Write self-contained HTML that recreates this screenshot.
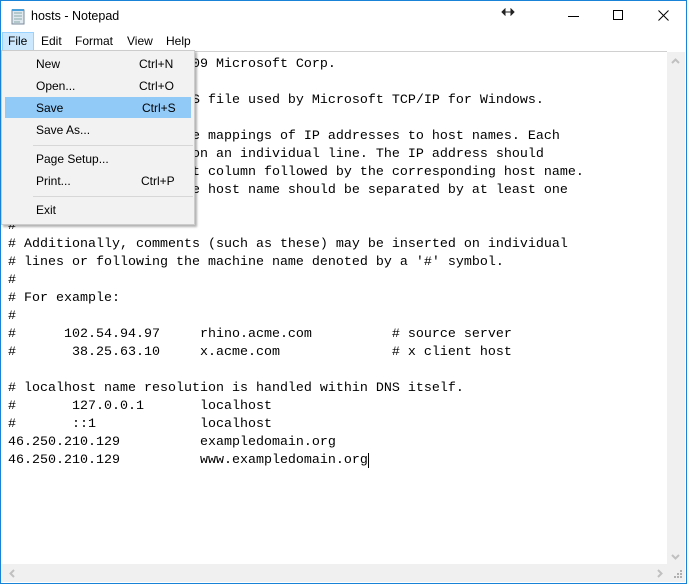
<!DOCTYPE html>
<html><head><style>
*{margin:0;padding:0;box-sizing:border-box}
body{width:687px;height:584px;overflow:hidden;background:#fff;font-family:"Liberation Sans",sans-serif;position:relative}
.win{position:absolute;left:0;top:0;width:687px;height:584px;border:1px solid #1883d7;background:#fff}
.title{position:absolute;left:30px;top:8px;font-size:12.5px;color:#000}
.menubar{position:absolute;top:31px;left:0;width:685px;height:19px;font-size:12px}
.menubar span{position:absolute;top:2px}
.file{position:absolute;left:1px;top:0;width:32px;height:19px;background:#cce8ff;border:1px solid #99d1ff}
.edit{position:absolute;left:1px;top:51px;width:666px;height:513px;border-top:1px solid #d0d0d0;background:#fff}
pre{position:absolute;left:7px;top:4px;font-family:"Liberation Mono",monospace;font-size:13.33px;line-height:18px;color:#000}
.vs{position:absolute;left:667px;top:52px;width:18px;height:513px;background:#f0f0f0}
.hs{position:absolute;left:1px;top:564px;width:684px;height:18px;background:#f0f0f0}
.menu{position:absolute;left:1px;top:50px;width:194px;height:175px;background:#f2f2f2;border:1px solid #ccc;box-shadow:2px 2px 2px rgba(0,0,0,.3);font-size:12px}
.it{position:absolute;left:0;width:192px;height:21px}
.it .l{position:absolute;left:34px;top:4px}
.it .r{position:absolute;left:137px;top:4px}
.sel{background:#91c9f7;left:3px;width:186px}
.sel .l{left:31px}.sel .r{left:134px}
.sep{position:absolute;left:31px;width:160px;height:1px;background:#d7d7d7}
</style></head><body>
<div class="win">
<svg style="position:absolute;left:9px;top:7px" width="16" height="17" viewBox="0 0 16 17"><rect x="2" y="2" width="12" height="14" fill="#dfe8ee" stroke="#7a8a99"/><path d="M4 5h8M4 8h8M4 11h8M4 14h6" stroke="#8aa" /><rect x="2" y="1" width="12" height="2" fill="#4aa0d8"/></svg>
<div class="title">hosts - Notepad</div>
<svg style="position:absolute;left:500px;top:7px" width="14" height="8"><path d="M1 4h12M1 4l3-3v6zM13 4l-3-3v6z" stroke="#222" fill="#222"/></svg>
<div style="position:absolute;left:567px;top:15px;width:11px;height:1px;background:#000"></div>
<div style="position:absolute;left:612px;top:9px;width:10px;height:10px;border:1px solid #000"></div>
<svg style="position:absolute;left:657px;top:9px" width="11" height="11"><path d="M0.5 0.5l10 10M10.5 0.5l-10 10" stroke="#000"/></svg>
<div class="menubar"><div class="file"></div><span style="left:7px">File</span><span style="left:40px">Edit</span><span style="left:74px">Format</span><span style="left:126px">View</span><span style="left:165px">Help</span></div>
</div>
<div class="edit"><pre># Copyright (c) 1993-2009 Microsoft Corp.
#
# This is a sample HOSTS file used by Microsoft TCP/IP for Windows.
#
# This file contains the mappings of IP addresses to host names. Each
# entry should be kept on an individual line. The IP address should
# be placed in the first column followed by the corresponding host name.
# The IP address and the host name should be separated by at least one
# space.
#
# Additionally, comments (such as these) may be inserted on individual
# lines or following the machine name denoted by a '#' symbol.
#
# For example:
#
#      102.54.94.97     rhino.acme.com          # source server
#       38.25.63.10     x.acme.com              # x client host

# localhost name resolution is handled within DNS itself.
#       127.0.0.1       localhost
#       ::1             localhost
46.250.210.129          exampledomain.org
46.250.210.129          www.exampledomain.org<span style="border-left:1px solid #000;margin-left:0"></span></pre></div>
<div class="vs"><svg style="position:absolute;left:4px;top:6px" width="9" height="6"><path d="M1 5l3.5-3.5L8 5" stroke="#c0c0c0" stroke-width="2" fill="none"/></svg><svg style="position:absolute;left:4px;top:502px" width="9" height="6"><path d="M1 1l3.5 3.5L8 1" stroke="#c0c0c0" stroke-width="2" fill="none"/></svg></div>
<div class="hs"><svg style="position:absolute;left:8px;top:5px" width="6" height="9"><path d="M5 1L1.5 4.5 5 8" stroke="#c0c0c0" stroke-width="2" fill="none"/></svg><svg style="position:absolute;left:656px;top:5px" width="6" height="9"><path d="M1 1l3.5 3.5L1 8" stroke="#c0c0c0" stroke-width="2" fill="none"/></svg>
<svg style="position:absolute;left:672px;top:6px" width="10" height="10" fill="#b0b0b0"><rect x="7" y="0" width="2" height="2"/><rect x="4" y="3" width="2" height="2"/><rect x="7" y="3" width="2" height="2"/><rect x="1" y="6" width="2" height="2"/><rect x="4" y="6" width="2" height="2"/><rect x="7" y="6" width="2" height="2"/></svg></div>
<div class="menu">
<div class="it" style="top:2px"><span class="l">New</span><span class="r">Ctrl+N</span></div>
<div class="it" style="top:24px"><span class="l">Open...</span><span class="r">Ctrl+O</span></div>
<div class="it sel" style="top:46px"><span class="l">Save</span><span class="r" style="left:137px">Ctrl+S</span></div>
<div class="it" style="top:68px"><span class="l">Save As...</span></div>
<div class="sep" style="top:94px"></div>
<div class="it" style="top:97px"><span class="l">Page Setup...</span></div>
<div class="it" style="top:119px"><span class="l">Print...</span><span class="r" style="left:139px">Ctrl+P</span></div>
<div class="sep" style="top:145px"></div>
<div class="it" style="top:148px"><span class="l">Exit</span></div>
</div>
</body></html>
